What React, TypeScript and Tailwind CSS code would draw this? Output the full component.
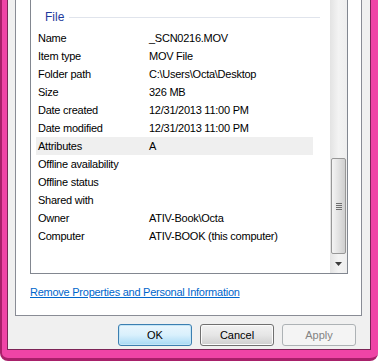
import React from 'react'

const rows: [string, string][] = [
    ['Name', '_SCN0216.MOV'],
    ['Item type', 'MOV File'],
    ['Folder path', 'C:\\Users\\Octa\\Desktop'],
    ['Size', '326 MB'],
    ['Date created', '12/31/2013 11:00 PM'],
    ['Date modified', '12/31/2013 11:00 PM'],
    ['Attributes', 'A'],
    ['Offline availability', ''],
    ['Offline status', ''],
    ['Shared with', ''],
    ['Owner', 'ATIV-Book\\Octa'],
    ['Computer', 'ATIV-BOOK (this computer)'],
]

function Scrollbar() {
    return (
        <div className="w-[17px] h-full flex flex-col bg-linear-to-r from-[#e3e3e3] via-[#f3f3f3] to-[#eeeeee]">
            <div className="h-[158px]" />
            <div className="mx-[1px] h-[96px] rounded-[2px] border border-[#979797] bg-linear-to-r from-[#f4f4f4] via-[#e2e2e2] to-[#cfcfcf] flex flex-col items-center justify-center gap-[1px]">
                <div className="w-[6px] h-[1px] bg-[#6e6e6e]" />
                <div className="w-[6px] h-[1px] bg-[#6e6e6e]" />
                <div className="w-[6px] h-[1px] bg-[#6e6e6e]" />
                <div className="w-[6px] h-[1px] bg-[#6e6e6e]" />
            </div>
            <div className="flex-1 flex items-center justify-center">
                <svg width="7" height="4" viewBox="0 0 7 4">
                    <path d="M0 0h7L3.5 4z" fill="#3c3c3c" />
                </svg>
            </div>
        </div>
    )
}

export default function App() {
    return (
        <div
            className="w-[378px] h-[361px] flex bg-[#ef44a6] rounded-b-[8px] border-l-2 border-b-[3px] border-[#a8206a] pl-[5px] pr-[7px] pb-[8px] text-[11px] tracking-[-0.25px] text-black"
            style={{ fontFamily: '"Liberation Sans", Arial, sans-serif' }}
        >
            <div className="flex-1 flex flex-col border-l border-r border-b border-[#7c2456] bg-[#f0f0f0] pl-[7px] pr-[8px]">
                <div className="h-[316px] flex flex-col border-l border-r border-b border-[#898c95] bg-white pl-[14px] pr-[13px]">
                    <div className="h-[274px] flex border-l border-r border-b border-[#828790] bg-white">
                        <div className="flex-1 flex flex-col">
                            <div className="mt-[8px] h-[18px] flex items-center pl-[14px] pr-[10px] gap-[5px]">
                                <span className="text-[#1e3a9c] text-[12px] tracking-normal">File</span>
                                <div className="flex-1 h-[1px] bg-[#e0e4ec]" />
                            </div>
                            <div className="mt-[3px] flex flex-col">
                                {rows.map(([label, value]) => (
                                    <div
                                        key={label}
                                        className={`ml-[5px] w-[277px] h-[18px] flex items-center ${label === 'Attributes' ? 'bg-[#efefef]' : ''}`}
                                    >
                                        <span className="w-[113px] pl-[2px] shrink-0">{label}</span>
                                        <span>{value}</span>
                                    </div>
                                ))}
                            </div>
                        </div>
                        <Scrollbar />
                    </div>
                    <div className="mt-[10px]">
                        <a className="text-[#0066cc] underline underline-offset-1 cursor-pointer">
                            Remove Properties and Personal Information
                        </a>
                    </div>
                </div>
                <div className="mt-[8px] flex justify-end gap-[8px] pr-[6px] tracking-normal">
                    <button className="w-[74px] h-[22px] rounded-[3px] border border-[#3c7fb1] bg-linear-to-b from-[#eaf6fd] via-[#d9f0fc] to-[#a7d9f5] shadow-[inset_0_0_0_1px_#c4e5f6]">
                        OK
                    </button>
                    <button className="w-[74px] h-[22px] rounded-[3px] border border-[#707070] bg-linear-to-b from-[#f2f2f2] via-[#e6e6e6] to-[#cfcfcf] shadow-[inset_0_0_0_1px_#fbfbfb]">
                        Cancel
                    </button>
                    <button className="w-[74px] h-[22px] rounded-[3px] border border-[#adb2b5] bg-[#f4f4f4] text-[#838383]">
                        Apply
                    </button>
                </div>
            </div>
        </div>
    )
}
